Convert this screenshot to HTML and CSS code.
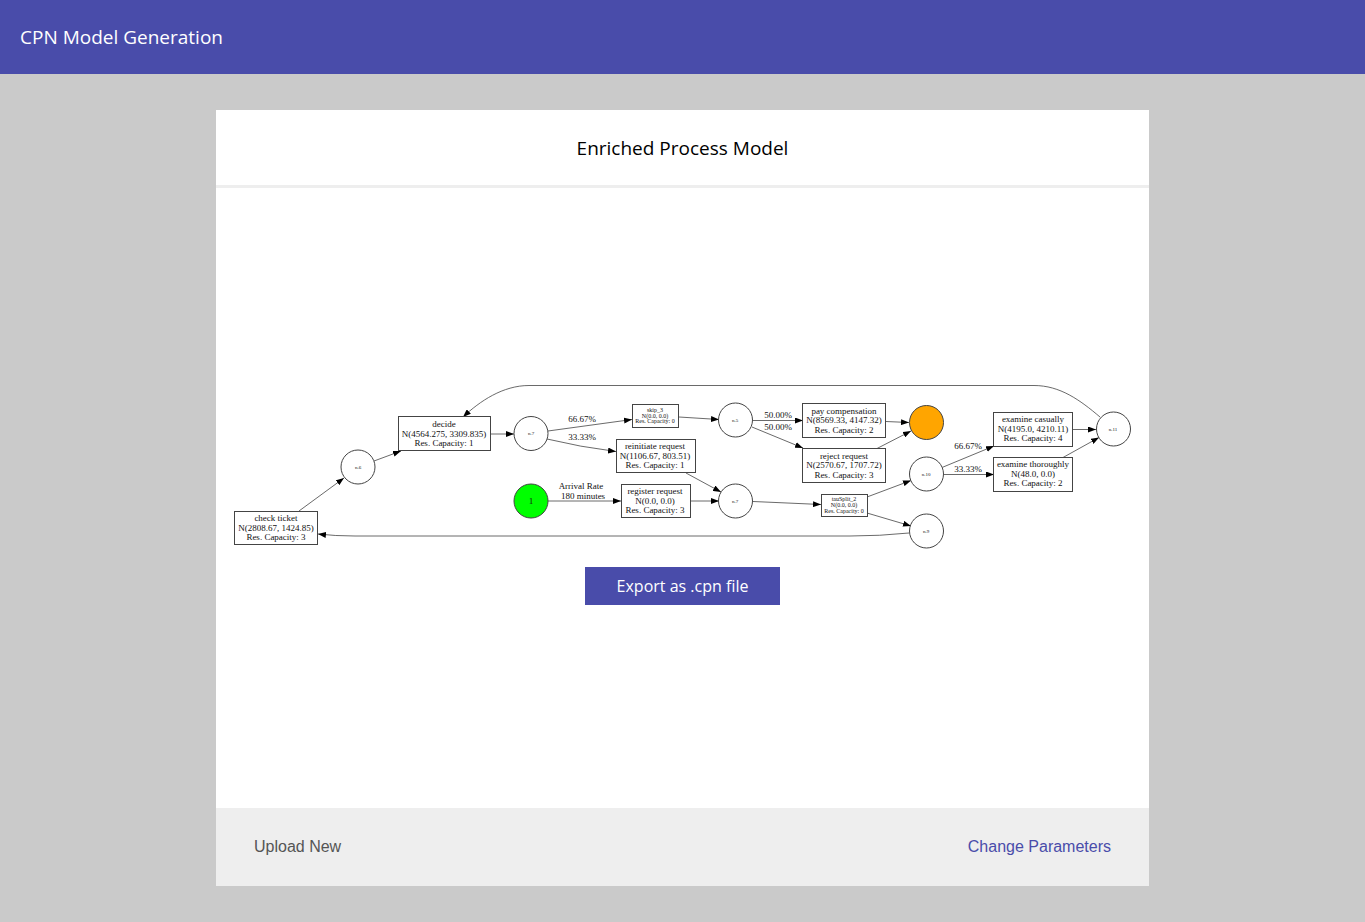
FILE: index.html
```html
<!DOCTYPE html>
<html lang="en">
<head>
<meta charset="utf-8">
<title>CPN Model Generation</title>
<meta name="viewport" content="width=device-width, initial-scale=1">
<link rel="stylesheet" href="styles.css">
</head>
<body>
<header class="topbar"><span class="brand">CPN Model Generation</span></header>
<main class="page">
  <section class="card">
    <h1 class="card-title">Enriched Process Model</h1>
    <div class="card-body">
      <svg class="model" viewBox="232 381 901 170" role="img" aria-label="Enriched process model">
        <defs>
          <marker id="arrow" viewBox="0 0 8 6" refX="8" refY="3" markerWidth="8" markerHeight="6" markerUnits="userSpaceOnUse" orient="auto">
            <path d="M0 0 L8 3 L0 6 Z"/>
          </marker>
        </defs>
        <g class="edges">
          <path d="M1100 417 C1080 400 1060 385.5 1034 385.5 H529 C503 385.5 480 401 463 417"/>
          <path d="M909 533 Q880 536 850 536 H355 Q335 536 318 534"/>
          <path d="M299 511 L344 478"/>
          <path d="M374 461 L401 451"/>
          <path d="M491 434 H514"/>
          <path d="M548 431 L632 419.5"/>
          <path d="M547 439 Q580 447 616 451.5"/>
          <path d="M548 501 H621"/>
          <path d="M679 417 L719 419.5"/>
          <path d="M686 473 L721 492"/>
          <path d="M690 501 H719"/>
          <path d="M753 420.5 H803"/>
          <path d="M752 427 L803 448"/>
          <path d="M753 501.5 L821 504.5"/>
          <path d="M886 421.5 L909 422.5"/>
          <path d="M877 448.5 L911 431"/>
          <path d="M867 497 L911 480.5"/>
          <path d="M867 513 L911 526"/>
          <path d="M942 467.5 L994 446"/>
          <path d="M944 474.5 H994"/>
          <path d="M1073 429.5 H1096"/>
          <path d="M1063 457.5 L1099 437.5"/>
        </g>
        <g class="nodes">
          <rect x="234.5" y="511.5" width="83" height="33"/>
          <rect x="398.5" y="416.5" width="92" height="34"/>
          <rect x="632.5" y="404.5" width="46" height="23"/>
          <rect x="616.5" y="439.5" width="79" height="33"/>
          <rect x="621.5" y="484.5" width="69" height="33"/>
          <rect x="802.5" y="403.5" width="83" height="34"/>
          <rect x="802.5" y="448.5" width="83" height="34"/>
          <rect x="821.5" y="494.5" width="46" height="22"/>
          <rect x="993.5" y="412.5" width="79" height="34"/>
          <rect x="993.5" y="457.5" width="79" height="34"/>
          <circle cx="358" cy="467" r="17"/>
          <circle cx="531" cy="433.5" r="17"/>
          <circle class="start" cx="531" cy="501" r="17"/>
          <circle cx="735.5" cy="420" r="17"/>
          <circle cx="735.5" cy="501" r="17"/>
          <circle class="end" cx="926.5" cy="422.5" r="17"/>
          <circle cx="926.5" cy="474" r="17"/>
          <circle cx="926.5" cy="531" r="17"/>
          <circle cx="1113.5" cy="429" r="17"/>
        </g>
        <g class="labels">
          <text x="276" y="521">check ticket</text><text x="276" y="531">N(2808.67, 1424.85)</text><text x="276" y="540">Res. Capacity: 3</text>
          <text x="444" y="427">decide</text><text x="444" y="437">N(4564.275, 3309.835)</text><text x="444" y="446">Res. Capacity: 1</text>
          <text x="655" y="449">reinitiate request</text><text x="655" y="459">N(1106.67, 803.51)</text><text x="655" y="468">Res. Capacity: 1</text>
          <text x="655" y="494">register request</text><text x="655" y="504">N(0.0, 0.0)</text><text x="655" y="513">Res. Capacity: 3</text>
          <text x="844" y="414">pay compensation</text><text x="844" y="423">N(8569.33, 4147.32)</text><text x="844" y="433">Res. Capacity: 2</text>
          <text x="844" y="459">reject request</text><text x="844" y="468">N(2570.67, 1707.72)</text><text x="844" y="478">Res. Capacity: 3</text>
          <text x="1033" y="422">examine casually</text><text x="1033" y="432">N(4195.0, 4210.11)</text><text x="1033" y="441">Res. Capacity: 4</text>
          <text x="1033" y="467">examine thoroughly</text><text x="1033" y="477">N(48.0, 0.0)</text><text x="1033" y="486">Res. Capacity: 2</text>
          <text x="582" y="422">66.67%</text><text x="582" y="440">33.33%</text>
          <text x="581" y="489">Arrival Rate</text><text x="583" y="499">180 minutes</text>
          <text x="778" y="418">50.00%</text><text x="778" y="430">50.00%</text>
          <text x="968" y="449">66.67%</text><text x="968" y="472">33.33%</text>
          <text x="531" y="504">1</text>
        </g>
        <g class="labels labels-small">
          <text x="655" y="412">skip_3</text><text x="655" y="418">N(0.0, 0.0)</text><text x="655" y="423">Res. Capacity: 0</text>
          <text x="844" y="501">tauSplit_2</text><text x="844" y="507">N(0.0, 0.0)</text><text x="844" y="513">Res. Capacity: 0</text>
        </g>
        <g class="labels labels-place">
          <text x="358" y="469">n.6</text>
          <text x="531" y="435">n.7</text>
          <text x="735" y="422">n.5</text>
          <text x="735" y="503">n.7</text>
          <text x="926" y="476">n.10</text>
          <text x="926" y="533">n.9</text>
          <text x="1113" y="431">n.11</text>
        </g>
      </svg>
      <button class="export" type="button">Export as .cpn file</button>
    </div>
    <footer class="card-footer">
      <a class="link link-muted" href="#upload">Upload New</a>
      <a class="link" href="#parameters">Change Parameters</a>
    </footer>
  </section>
</main>
</body>
</html>
```
FILE: styles.css
```css
* { box-sizing: border-box; }
body {
  margin: 0;
  min-height: 100vh;
  display: flex;
  flex-direction: column;
  background: #cacaca;
  font-family: "Open Sans", sans-serif;
}
.topbar {
  display: flex;
  align-items: center;
  padding: 24px 20px;
  background: #494caa;
  color: #fff;
}
.brand { font-size: 19px; line-height: 26px; }
.page {
  flex: 1;
  display: flex;
  padding: 36px 216px;
}
.card {
  flex: 1;
  min-width: 0;
  display: flex;
  flex-direction: column;
  background: #fff;
}
.card-title {
  margin: 0;
  padding: 25px 16px 24px;
  border-bottom: 3px solid #eee;
  font-size: 19px;
  line-height: 26px;
  font-weight: 400;
  text-align: center;
  color: #000;
}
.card-body {
  flex: 1;
  display: flex;
  flex-direction: column;
  align-items: center;
  justify-content: center;
  padding: 0 16px;
}
.model { display: block; width: 100%; }
.edges path { fill: none; stroke: #444; stroke-width: 0.8; marker-end: url(#arrow); }
.edges + .nodes rect, .nodes circle { fill: #fff; stroke: #444; stroke-width: 1; }
.nodes .start { fill: #0f0; }
.nodes .end { fill: #ffa500; }
.labels {
  font-family: "Liberation Serif", serif;
  font-size: 9px;
  text-anchor: middle;
  fill: #111;
}
.labels-small { font-size: 6px; }
.labels-place { font-size: 5px; }
.export {
  margin: 16px 0 10px;
  padding: 8px 32px;
  border: 0;
  background: #494caa;
  color: #fff;
  font-family: inherit;
  font-size: 16px;
  line-height: 22px;
  cursor: pointer;
}
.card-footer {
  display: flex;
  justify-content: space-between;
  padding: 28px 38px;
  background: #eee;
}
.link {
  font-family: "Liberation Sans", Arial, sans-serif;
  font-size: 16px;
  line-height: 22px;
  color: #494caa;
  text-decoration: none;
}
.link-muted { color: #555; }
```
